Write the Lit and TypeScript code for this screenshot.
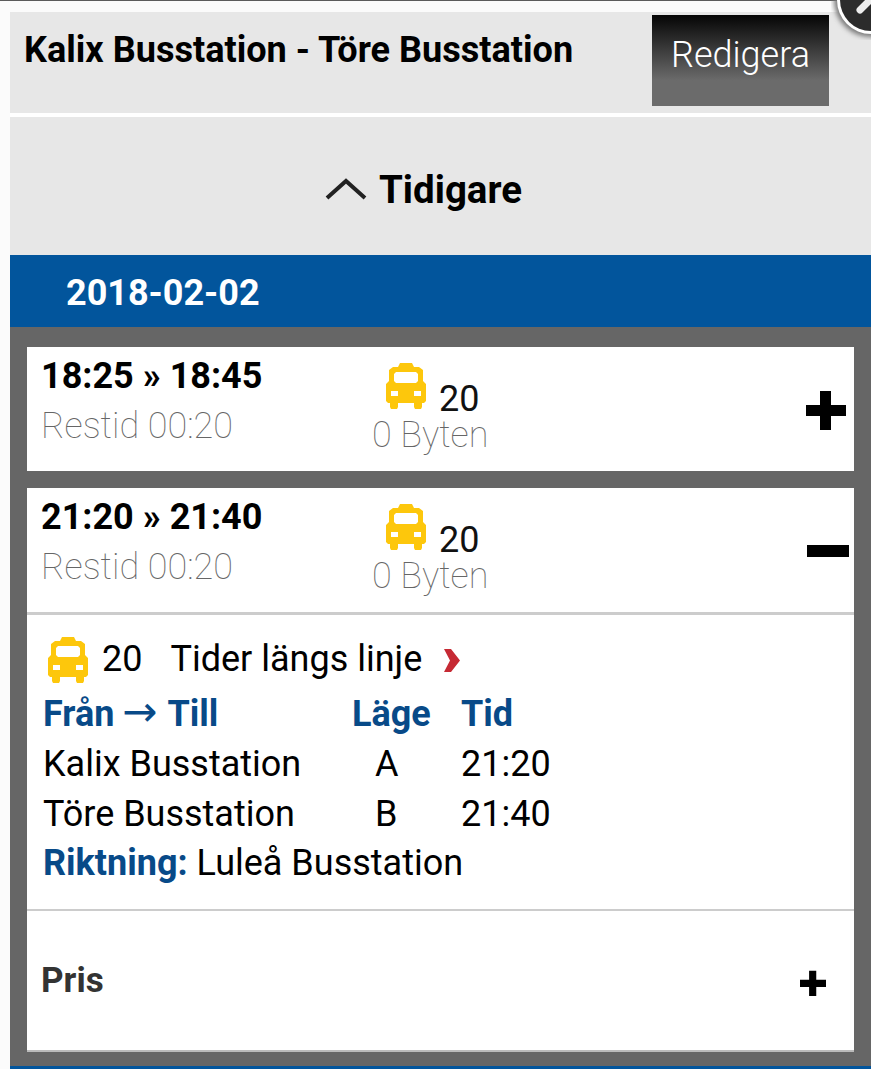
import { LitElement, html, css } from "lit";
import { customElement } from "lit/decorators.js";

const bus = (cls: string) => html`<svg class=${cls} viewBox="0 0 40 47" aria-hidden="true">
  <path fill="#fdc70c" fill-rule="evenodd" d="M14 1h12l2 4h5l4 3v11l3 3v17l-2 2h-2v4l-1 2h-6l-1-2v-4H12v4l-1 2H5l-1-2v-4H2l-2-2V22l3-3V8l4-3h5zM10 10l-2 2v7l2 2h20l2-2v-7l-2-2zM5 29v5h7v-5zM28 29v5h7v-5z"/>
</svg>`;

const plus = (cls: string) => html`<svg class=${cls} viewBox="0 0 40 40" aria-hidden="true"><path d="M14 1h11v14h15v11H25v14H14V26H0V15h14z"/></svg>`;

@customElement("app-root")
export class AppRoot extends LitElement {
  static styles = css`
    :host { display: block; position: relative; width: 871px; height: 1069px; overflow: hidden; background: #fbfbfb; font-family: Roboto, sans-serif; color: #000; }
    .page { padding: 12px 0 0 10px; display: flex; flex-direction: column; }
    .head { height: 101px; background: #e7e7e7; display: flex; justify-content: space-between; padding-right: 42px; border-bottom: 4px solid #fff; }
    .title { font-size: 36.1px; font-weight: 700; padding: 18px 0 0 14px; line-height: 40px; white-space: nowrap; }
    .edit { width: 177px; height: 91px; margin-top: 3px; background: linear-gradient(#050505, #6b6b6b 72%); color: #fff; font-size: 36px; font-weight: 300; display: flex; justify-content: center; padding-top: 20px; box-sizing: border-box; line-height: 40px; }
    .earlier { height: 138px; background: #e7e7e7; display: flex; justify-content: center; align-items: center; gap: 12px; font-size: 38.5px; font-weight: 700; padding-right: 34px; }
    .earlier span { position: relative; top: 3px; }
    .earlier svg { width: 42px; height: 22px; margin-top: 6px; filter: blur(.6px); }
    .date { height: 72px; background: #02559c; color: #fff; font-size: 36px; font-weight: 700; padding-left: 56px; line-height: 76px; }
    .list { background: #666; padding: 20px 17px 14px; display: flex; flex-direction: column; gap: 17px; }
    .card { background: #fff; }
    .trip { height: 124px; display: grid; grid-template-columns: 330px 130px 1fr 62px; padding-left: 14px; box-sizing: border-box; }
    .times { font-size: 36px; font-weight: 700; line-height: 40px; padding-top: 9px; }
    .dur { font-size: 36px; font-weight: 100; color: #666; line-height: 40px; margin-top: 10px; }
    .line { display: flex; flex-direction: column; }
    .busrow { display: flex; height: 62px; padding: 15px 0 0 15px; box-sizing: border-box; }
    .ic { width: 40px; height: 47px; flex: none; }
    .num { font-size: 36px; line-height: 30px; margin: 22px 0 0 13px; color: #111; }
    .changes { font-size: 36px; font-weight: 100; color: #666; line-height: 30px; margin: 11px 0 0 1px; white-space: nowrap; }
    .toggle { display: flex; justify-content: flex-end; padding: 43px 8px 0 0; }
    .toggle svg { width: 40px; height: 40px; }
    .minus { width: 42px; height: 12px; background: #000; margin: 14px -3px 0 0; }
    .detail { border-top: 3px solid #ccc; padding: 19px 16px 0; height: 299px; box-sizing: border-box; border-bottom: 2px solid #ccc; }
    .linehead { display: flex; align-items: center; font-size: 36px; height: 50px; }
    .linehead .ic { margin: 0 14px 0 5px; }
    .linehead .link { margin-left: 28px; }
    .chev { width: 18px; height: 25px; margin-left: 21px; margin-top: 3px; }
    .table { display: grid; grid-template-columns: 309px 109px 1fr; font-size: 36px; line-height: 50px; margin-top: 5px; }
    .table + .table { margin-top: -1px; }
    .table b, .dir b { color: #084a88; font-weight: 700; }
    .arrow { font-family: "DejaVu Sans", sans-serif; font-weight: 400; font-size: 42px; margin: 0 2px 0 -1px; line-height: 1; }
    .ctr { padding-left: 23px; }
    .nowrap { white-space: nowrap; }
    .pris { height: 141px; display: flex; justify-content: space-between; padding: 50px 28px 0 14px; box-sizing: border-box; border-bottom: 2px solid #bbb; font-size: 35px; font-weight: 700; color: #333; line-height: 40px; }
    .pris svg { width: 26px; height: 26px; margin-top: 9px; }
    .next { height: 4px; background: #02559c; }
    .strip { position: absolute; left: 0; top: 0; width: 871px; height: 1px; background: #333; opacity: .8; }
    .close { position: absolute; right: -40px; top: -40px; width: 80px; height: 80px; }
    .close .shadow { filter: blur(2.5px); }
  `;

  private trip(time: string, icon: unknown) {
    return html`<div class="trip">
      <div><div class="times">${time}</div><div class="dur">Restid 00:20</div></div>
      <div class="line">
        <div class="busrow">${bus("ic")}<span class="num">20</span></div>
        <div class="changes">0 Byten</div>
      </div>
      <div></div>
      <div class="toggle">${icon}</div>
    </div>`;
  }

  render() {
    return html`
      <div class="page">
        <div class="head">
          <div class="title">Kalix Busstation - Töre Busstation</div>
          <div class="edit">Redigera</div>
        </div>
        <div class="earlier">
          <svg viewBox="0 0 42 22"><path d="M2 20 21 3l19 17" fill="none" stroke="#222" stroke-width="4"/></svg>
          <span>Tidigare</span>
        </div>
        <div class="date">2018-02-02</div>
        <div class="list">
          <div class="card">${this.trip("18:25 » 18:45", plus(""))}</div>
          <div class="card">
            ${this.trip("21:20 » 21:40", html`<div class="minus"></div>`)}
            <div class="detail">
              <div class="linehead">${bus("ic")}<span>20</span><span class="link">Tider längs linje</span>
                <svg class="chev" viewBox="0 0 18 25"><path d="M1 1h7l9 11.500L8 24H1l6-11.500z" fill="#c62a34"/></svg>
              </div>
              <div class="table">
                <b class="nowrap">Från <span class="arrow">→</span> Till</b><b>Läge</b><b>Tid</b>
                <span>Kalix Busstation</span><span class="ctr">A</span><span>21:20</span>
                <span>Töre Busstation</span><span class="ctr">B</span><span>21:40</span>
              </div>
              <div class="table dir"><span class="nowrap"><b>Riktning:</b> Luleå Busstation</span></div>
            </div>
            <div class="pris"><span>Pris</span>${plus("")}</div>
          </div>
        </div>
        <div class="next"></div>
      </div>
      <div class="strip"></div>
      <svg class="close" viewBox="0 0 80 80">
        <circle class="shadow" cx="40" cy="40" r="37" fill="#777"/>
        <circle cx="40" cy="40" r="34" fill="#fff"/>
        <circle cx="40" cy="40" r="31" fill="#2c2c2c"/>
        <path d="M29 50 40 39" stroke="#eee" stroke-width="7" stroke-linecap="round"/>
      </svg>
    `;
  }
}
